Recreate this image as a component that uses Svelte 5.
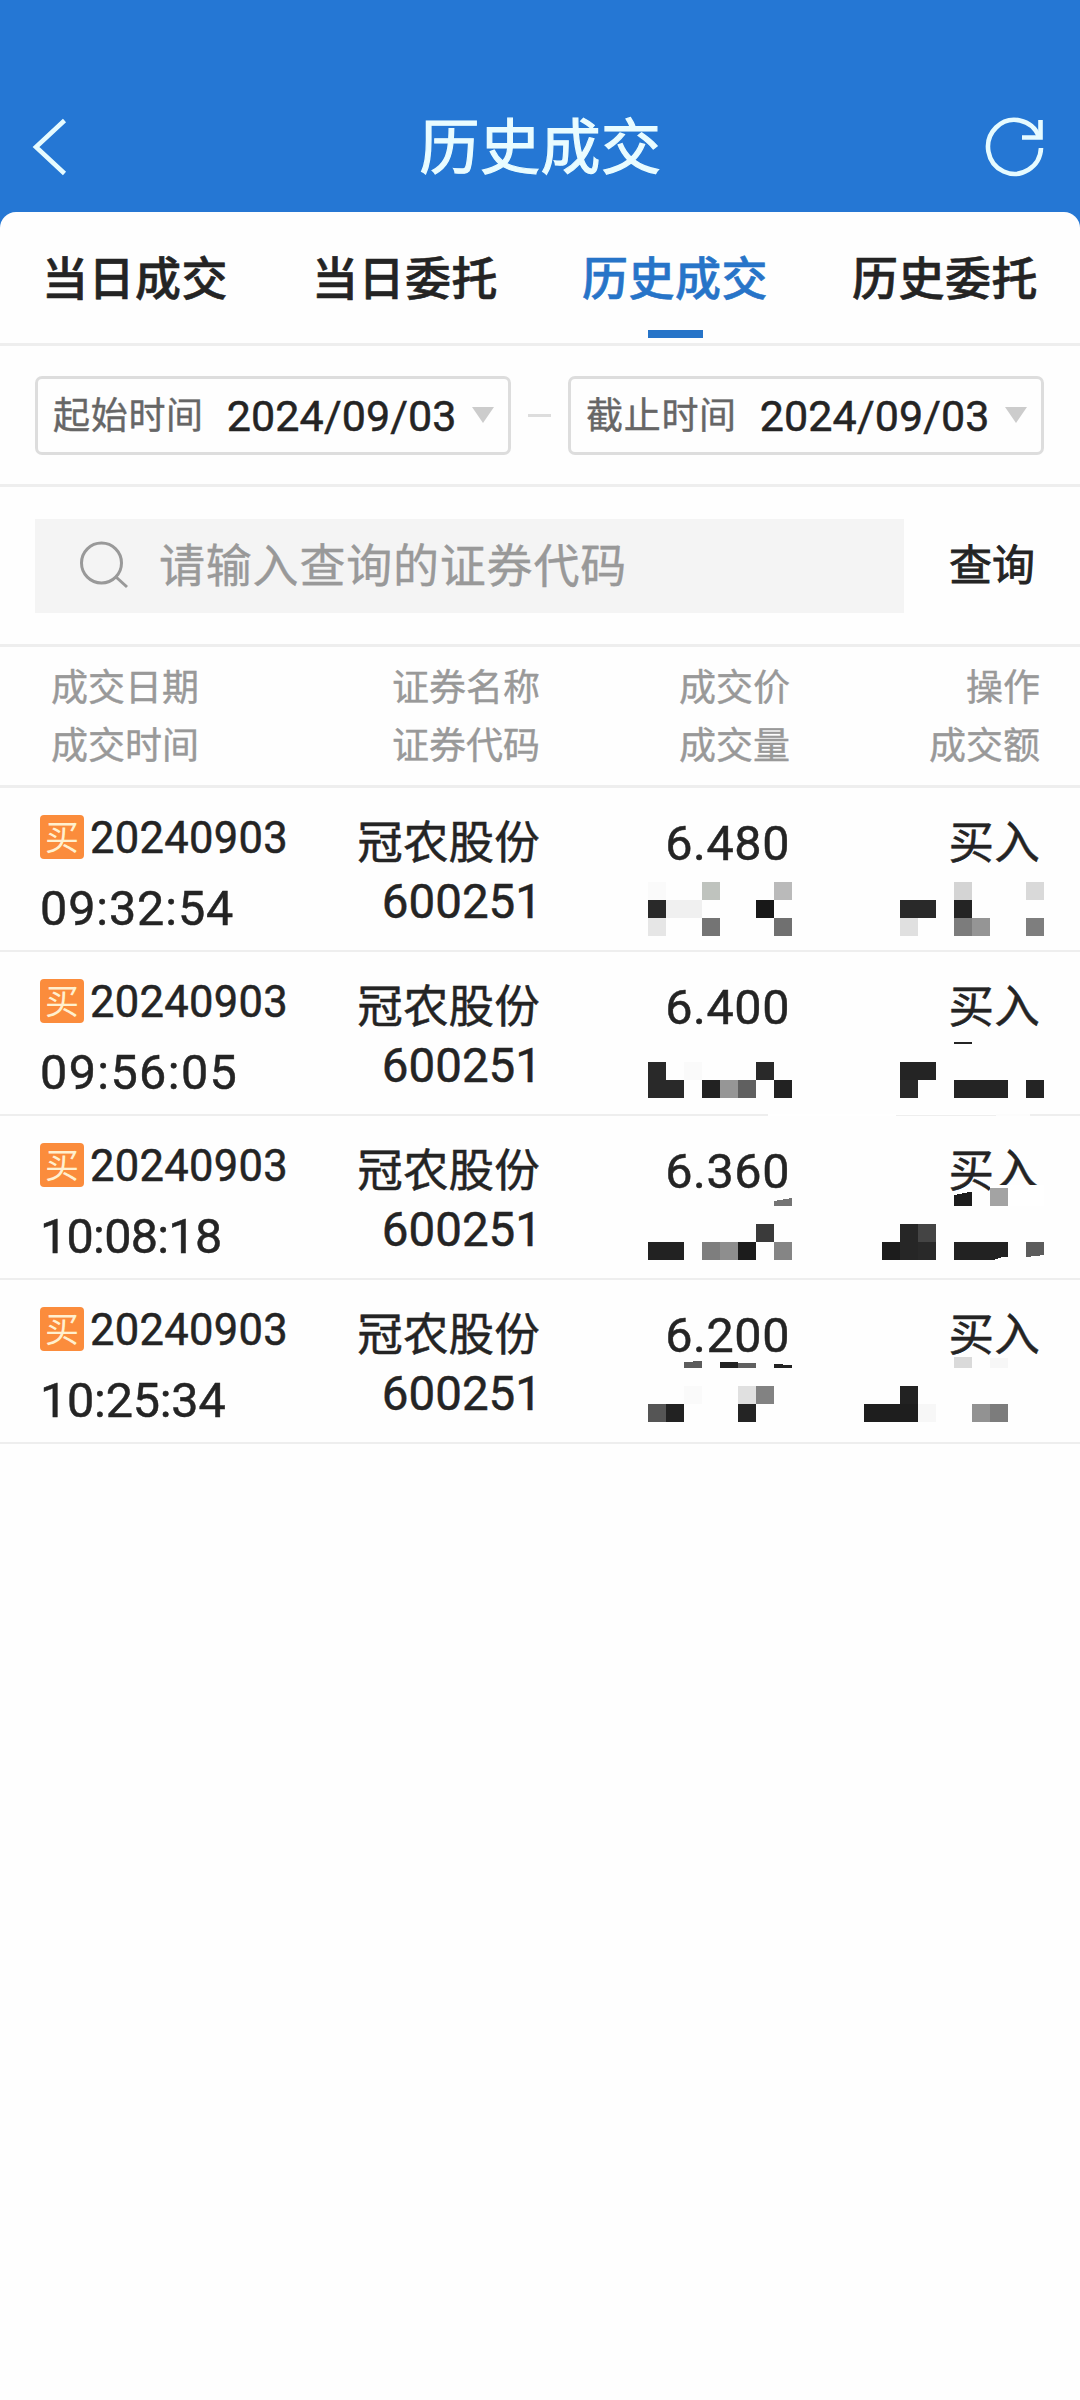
<script lang="ts">
  type Block = [number, number, number, number, string];

  const tabs = ['当日成交', '当日委托', '历史成交', '历史委托'];
  const activeTab = '历史成交';

  const dates = [
    { label: '起始时间', value: '2024/09/03' },
    { label: '截止时间', value: '2024/09/03' }
  ];

  const columns = [
    ['成交日期', '成交时间'],
    ['证券名称', '证券代码'],
    ['成交价', '成交量'],
    ['操作', '成交额']
  ];

  // mask: blocks that hide volume and amount, [x, y, width, height, fill] inside the row
  const trades: { date: string; time: string; spacing: number; price: string; mask: Block[]; shards: [string, string][] }[] = [
    {
      date: '20240903', time: '09:32:54', spacing: 0.9, price: '6.480',
      mask: [
        [648, 94, 18, 18, '#fafafa'], [702, 94, 18, 18, '#bfc3be'], [774, 94, 18, 18, '#bababa'],
        [648, 112, 18, 18, '#292929'], [666, 112, 36, 18, '#f0f0f0'], [756, 112, 18, 18, '#181818'],
        [648, 130, 18, 18, '#e6e6e6'], [702, 130, 18, 18, '#747474'], [774, 130, 18, 18, '#707070'],
        [954, 94, 18, 18, '#d4d4d4'], [1026, 94, 18, 18, '#d9d9d9'],
        [900, 112, 36, 18, '#292929'], [954, 112, 18, 18, '#242424'],
        [900, 130, 18, 18, '#e0e0e0'], [954, 130, 18, 18, '#7c7c7c'], [972, 130, 18, 18, '#959595'], [1026, 130, 18, 18, '#7e7e7e']
      ],
      shards: []
    },
    {
      date: '20240903', time: '09:56:05', spacing: 1.4, price: '6.400',
      mask: [
        [648, 110, 18, 36, '#292929'], [684, 110, 18, 18, '#fafafa'], [756, 110, 18, 18, '#292929'],
        [666, 128, 18, 18, '#292929'], [702, 128, 18, 18, '#222222'], [720, 128, 18, 18, '#969696'],
        [738, 128, 18, 18, '#606060'], [774, 128, 18, 18, '#222222'],
        [954, 90, 18, 2, '#242424'], [900, 110, 36, 18, '#242424'], [900, 128, 18, 18, '#292929'],
        [954, 128, 54, 18, '#242424'], [1026, 128, 18, 18, '#242424'],
        [768, 162, 128, 2, '#ffffff'], [896, 162, 100, 1, '#ffffff'], [996, 162, 34, 2, '#fcfcfc']
      ],
      shards: []
    },
    {
      date: '20240903', time: '10:08:18', spacing: -0.7, price: '6.360',
      mask: [
        [990, 69, 54, 21, '#ffffff'], [990, 72, 18, 18, '#a3a3a3'],
        [756, 108, 18, 18, '#3a3a3a'],
        [648, 126, 36, 18, '#222222'], [702, 126, 18, 18, '#7e7e7e'], [720, 126, 18, 18, '#8e8e8e'],
        [738, 126, 18, 18, '#1c1c1c'], [774, 126, 18, 18, '#858585'],
        [900, 108, 18, 36, '#262626'], [918, 108, 18, 18, '#444444'],
        [882, 126, 18, 18, '#1c1c1c'], [918, 126, 18, 18, '#292929']
      ],
      shards: [
        ['774,85 792,82 792,90 774,90', '#747474'],
        ['954,79 972,75.5 972,90 954,90', '#1c1c1c'],
        ['954,126 1008,126 1008,141 1001,141.5 994,144 954,144', '#222222'],
        ['1026,126 1044,126 1044,139 1026,141', '#5c5c5c']
      ]
    },
    {
      date: '20240903', time: '10:25:34', spacing: -0.2, price: '6.200',
      mask: [
        [954, 77, 18, 11, '#dadada'], [990, 78, 18, 10, '#f7f7f7'],
        [684, 106, 18, 18, '#fafafa'], [738, 106, 18, 18, '#e0e0e0'], [756, 106, 18, 18, '#828282'],
        [648, 124, 18, 18, '#555555'], [666, 124, 18, 18, '#222222'], [738, 124, 18, 18, '#242424'],
        [900, 106, 18, 18, '#222222'], [864, 124, 54, 18, '#1e1e1e'], [918, 124, 18, 18, '#f7f7f7'],
        [972, 124, 18, 18, '#929292'], [990, 124, 18, 18, '#7c7c7c']
      ],
      shards: [
        ['684,82 702,81 702,88 684,88', '#5c5c5c'],
        ['720,82 738,82.5 738,88 720,88', '#222222'],
        ['738,82.5 756,83 756,88 738,88', '#606060'],
        ['774,84 792,85 792,88 774,88', '#222222']
      ]
    }
  ];
</script>

<div class="app">
  <header class="topbar">
    <svg class="back" viewBox="0 0 36 60" aria-hidden="true">
      <path d="M32.5 3.5 L4 30 L32.5 56.5" />
    </svg>
    <h1>历史成交</h1>
    <svg class="refresh" viewBox="0 0 60 60" aria-hidden="true">
      <path d="M56 31 A26.5 27 0 1 1 54 19.5" />
      <path d="M55.5 3 V20.5 H37" />
    </svg>
  </header>

  <main class="sheet">
    <nav class="tabs">
      {#each tabs as tab}
        <div class="tab" class:active={tab === activeTab}>{tab}</div>
      {/each}
    </nav>

    <section class="range">
      {#each dates as item, i}
        {#if i > 0}<span class="dash"></span>{/if}
        <div class="date-box">
          <span class="date-label">{item.label}</span>
          <span class="date-value">{item.value}</span>
          <span class="caret"></span>
        </div>
      {/each}
    </section>

    <section class="search">
      <div class="field">
        <svg viewBox="0 0 52 52" aria-hidden="true">
          <circle cx="22.5" cy="23" r="20" />
          <path d="M37 37 L48 47" />
        </svg>
        <span>请输入查询的证券代码</span>
      </div>
      <div class="query">查询</div>
    </section>

    <section class="row table-head">
      {#each columns as [top, bottom]}
        <div class="cell"><span>{top}</span><span>{bottom}</span></div>
      {/each}
    </section>

    {#each trades as trade}
      <article class="row trade">
        <div class="cell when">
          <div class="date-line"><i class="badge">买</i><span class="date">{trade.date}</span></div>
          <div class="time" style="letter-spacing: {trade.spacing}px">{trade.time}</div>
        </div>
        <div class="cell"><span class="name">冠农股份</span><span class="code">600251</span></div>
        <div class="cell"><span class="price">{trade.price}</span></div>
        <div class="cell"><span class="name">买入</span></div>
        <svg class="mask" viewBox="0 0 1080 164" shape-rendering="crispEdges" aria-hidden="true">
          {#each trade.mask as [x, y, width, height, fill]}
            <rect {x} {y} {width} {height} {fill} />
          {/each}
          {#each trade.shards as [points, fill]}
            <polygon {points} {fill} />
          {/each}
        </svg>
      </article>
    {/each}
  </main>
</div>

<style>
  :global(body) {
    background: #fefefe;
  }
  .app {
    width: 1080px;
    min-height: 2400px;
    background: #2577d4;
    color: #242424;
    font-family: 'Noto Sans CJK SC', 'Noto Sans', sans-serif;
    display: flex;
    flex-direction: column;
  }
  .topbar {
    height: 212px;
    padding: 82px 35px 0 32px;
    box-sizing: border-box;
    display: flex;
    align-items: center;
    justify-content: space-between;
  }
  .topbar svg {
    fill: none;
    stroke: #e6fbff;
    stroke-width: 4.6;
  }
  .back {
    width: 36px;
    height: 60px;
    margin-right: 28px;
  }
  .refresh {
    width: 60px;
    height: 60px;
  }
  h1 {
    margin: 0;
    padding-bottom: 8px;
    color: #e9fcff;
    font-size: 60px;
    font-weight: 400;
    line-height: 80px;
    letter-spacing: 0.5px;
    -webkit-text-stroke: 1.2px currentColor;
  }
  .sheet {
    flex: 1;
    background: #fefefe;
    border-radius: 16px 16px 0 0;
  }
  .tabs {
    display: flex;
    height: 131px;
    border-bottom: 3px solid #eeeeee;
  }
  .tab {
    flex: 1;
    display: flex;
    flex-direction: column;
    align-items: center;
    font-size: 46px;
    font-weight: 500;
    line-height: 66px;
    letter-spacing: 0.5px;
    padding-top: 30px;
    -webkit-text-stroke: 0.6px currentColor;
  }
  .tab.active {
    color: #2774c8;
  }
  .tab.active::after {
    content: '';
    width: 55px;
    height: 8px;
    margin-top: 22px;
    background: #2774c8;
  }
  .range {
    display: flex;
    align-items: center;
    justify-content: space-between;
    height: 138px;
    padding: 0 36px 0 35px;
    border-bottom: 3px solid #eeeeee;
  }
  .date-box {
    box-sizing: border-box;
    width: 476px;
    height: 79px;
    padding: 0 14px 0 15px;
    border: 3px solid #dddddd;
    border-radius: 7px;
    display: flex;
    align-items: center;
  }
  .date-label {
    padding-bottom: 4px;
    color: #666666;
    font-size: 37px;
    letter-spacing: 0.7px;
  }
  .date-value {
    margin-left: 23px;
    padding-top: 2px;
    font-size: 43px;
    letter-spacing: 0.1px;
    white-space: nowrap;
  }
  .date-value,
  .date,
  .time,
  .code,
  .price {
    font-family: Roboto, 'Noto Sans CJK SC', sans-serif;
    -webkit-text-stroke: 0.5px currentColor;
  }
  .caret {
    margin-left: auto;
    border: 11px solid transparent;
    border-top: 16px solid #cccccc;
    border-bottom: 0;
  }
  .dash {
    width: 23px;
    height: 3px;
    background: #dddddd;
  }
  .search {
    display: flex;
    align-items: center;
    height: 157px;
    padding-left: 35px;
    border-bottom: 3px solid #eeeeee;
  }
  .field {
    display: flex;
    align-items: center;
    box-sizing: border-box;
    width: 869px;
    height: 94px;
    padding-left: 44px;
    background: #f4f4f4;
    color: #999999;
    font-size: 46px;
    letter-spacing: 0.8px;
  }
  .field span {
    padding-bottom: 8px;
  }
  .field svg {
    width: 52px;
    height: 52px;
    margin-right: 28px;
    fill: none;
    stroke: #999999;
    stroke-width: 3;
  }
  .query {
    margin-left: 45px;
    padding-bottom: 7px;
    font-size: 43px;
    -webkit-text-stroke: 0.8px currentColor;
  }
  .row {
    display: grid;
    grid-template-columns: 300px 240px 250px 250px;
    box-sizing: border-box;
  }
  .cell {
    display: flex;
    flex-direction: column;
    align-items: flex-end;
    line-height: 58px;
  }
  .table-head {
    height: 141px;
    padding-top: 9px;
    border-bottom: 3px solid #eeeeee;
    color: #999999;
    font-size: 37px;
  }
  .table-head,
  .field,
  .date-label {
    -webkit-text-stroke: 0.4px currentColor;
  }
  .table-head .cell:first-child {
    align-items: flex-start;
    padding-left: 51px;
  }
  .trade {
    position: relative;
    height: 164px;
    padding-top: 22px;
    border-bottom: 2px solid #eeeeee;
  }
  .when {
    align-items: flex-start;
    margin-top: -6px;
    padding-left: 40px;
  }
  .date-line {
    display: flex;
    align-items: center;
    height: 60px;
  }
  .badge {
    width: 44px;
    height: 44px;
    margin: 6px 6px 0 0;
    border-radius: 4px;
    background: #fb8c3c;
    color: #fff0cf;
    font-size: 34px;
    font-style: normal;
    line-height: 42px;
    text-align: center;
  }
  .date {
    padding-top: 10px;
    font-size: 43.5px;
    letter-spacing: 0.3px;
  }
  .time {
    font-size: 48.5px;
    line-height: 90px;
  }
  .name {
    font-size: 45.5px;
    letter-spacing: 0.2px;
    -webkit-text-stroke: 0.5px currentColor;
  }
  .code {
    margin-right: -2px;
    font-size: 47.5px;
    line-height: 68px;
  }
  .price {
    font-size: 48.5px;
    line-height: 67px;
    letter-spacing: 0.6px;
  }
  .mask {
    position: absolute;
    left: 0;
    top: 0;
    width: 1080px;
    height: 164px;
  }
</style>
